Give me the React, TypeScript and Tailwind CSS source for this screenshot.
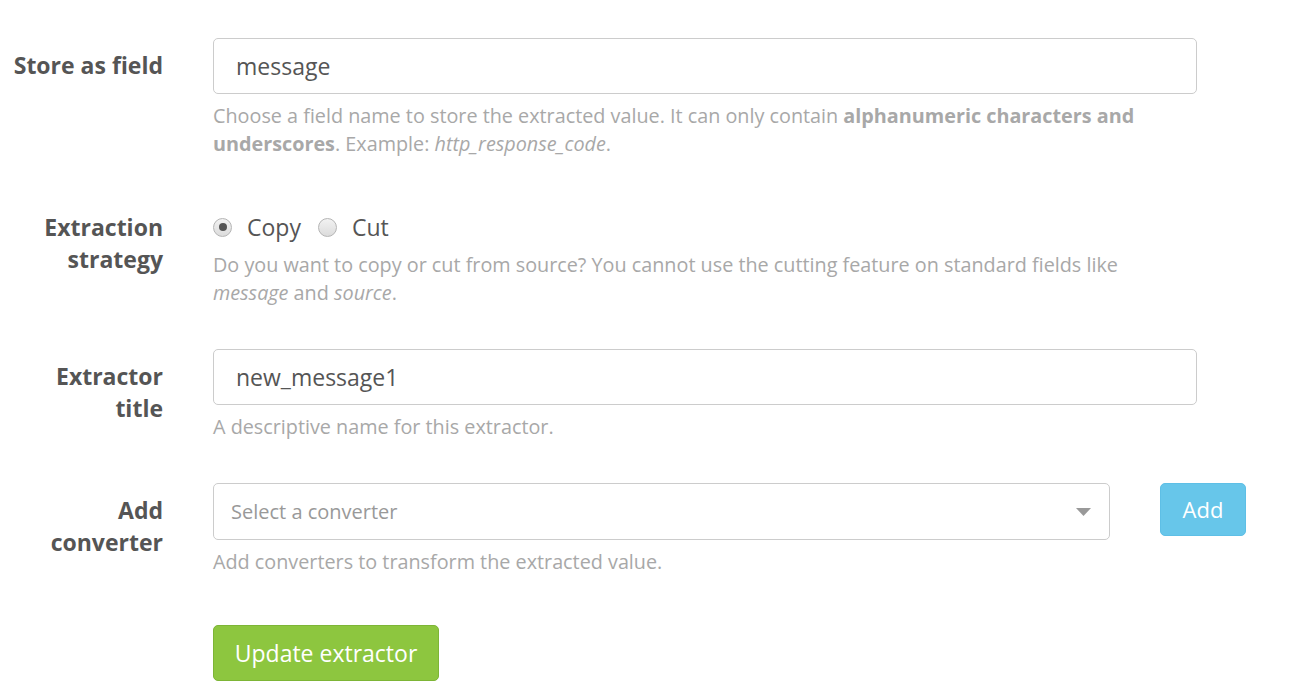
import React from "react";

const Label = ({ children }: { children: React.ReactNode }) => (
  <label className="w-[163px] shrink-0 pt-[11px] text-right text-[23px] font-bold leading-[32px] text-[#555]">
    {children}
  </label>
);

const Help = ({ children, className = "" }: { children: React.ReactNode; className?: string }) => (
  <p className={`text-[19.8px] leading-[28px] text-[#a8a8a8] ${className}`}>{children}</p>
);

const Radio = ({ checked }: { checked?: boolean }) => (
  <span className="flex h-[19px] w-[19px] items-center justify-center rounded-full border border-[#b5b5b5] bg-gradient-to-b from-[#f2f2f2] to-[#dcdcdc]">
    {checked && <span className="h-[8px] w-[8px] rounded-full bg-[#555]" />}
  </span>
);

export default function App() {
  return (
    <div className="min-h-[691px] bg-white pt-[38px] font-['Open_Sans',sans-serif]">
      {/* Store as field */}
      <div className="mb-[42px] flex gap-[50px]">
        <Label>Store as field</Label>
        <div className="w-[984px]">
          <input
            readOnly
            value="message"
            className="h-[56px] w-full rounded-[5px] border border-[#ccc] px-[22px] text-[23px] text-[#555] outline-none"
          />
          <Help className="mt-[8px]">
            Choose a field name to store the extracted value. It can only contain{" "}
            <strong className="font-bold">alphanumeric characters and</strong>
            <br />
            <strong className="font-bold">underscores</strong>. Example: <em>http_response_code</em>.
          </Help>
        </div>
      </div>

      {/* Extraction strategy */}
      <div className="mb-[42px] flex gap-[50px]">
        <Label>
          Extraction
          <br />
          strategy
        </Label>
        <div className="w-[984px] pt-[11px]">
          <div className="flex h-[32px] items-center text-[23px] text-[#555]">
            <Radio checked />
            <span className="ml-[15px]">Copy</span>
            <span className="ml-[17px]">
              <Radio />
            </span>
            <span className="ml-[15px]">Cut</span>
          </div>
          <Help className="mt-[8px]">
            Do you want to copy or cut from source? You cannot use the cutting feature on standard fields like
            <br />
            <em>message</em> and <em>source</em>.
          </Help>
        </div>
      </div>

      {/* Extractor title */}
      <div className="mb-[42px] flex gap-[50px]">
        <Label>
          Extractor
          <br />
          title
        </Label>
        <div className="w-[984px]">
          <input
            readOnly
            value="new_message1"
            className="h-[56px] w-full rounded-[5px] border border-[#ccc] px-[22px] text-[23px] text-[#555] outline-none"
          />
          <Help className="mt-[8px]">A descriptive name for this extractor.</Help>
        </div>
      </div>

      {/* Add converter */}
      <div className="flex gap-[50px]">
        <Label>
          Add
          <br />
          converter
        </Label>
        <div className="w-[1033px]">
          <div className="flex items-start gap-[50px]">
            <div className="flex h-[57px] w-[897px] items-center justify-between rounded-[5px] border border-[#ccc] pl-[17px] pr-[18px]">
              <span className="text-[20px] text-[#999]">Select a converter</span>
              <svg width="15" height="8" viewBox="0 0 15 8">
                <path d="M0 0h15L7.5 8z" fill="#999" />
              </svg>
            </div>
            <button className="h-[53px] w-[86px] rounded-[5px] border border-[#5ebfe6] bg-[#67c6ea] text-[22px] text-white">
              Add
            </button>
          </div>
          <Help className="mt-[8px]">Add converters to transform the extracted value.</Help>
        </div>
      </div>

      <div className="mt-[49px] pl-[213px]">
        <button className="h-[56px] w-[226px] rounded-[5px] border border-[#7db536] bg-[#8dc63f] text-[23px] text-white">
          Update extractor
        </button>
      </div>
    </div>
  );
}
